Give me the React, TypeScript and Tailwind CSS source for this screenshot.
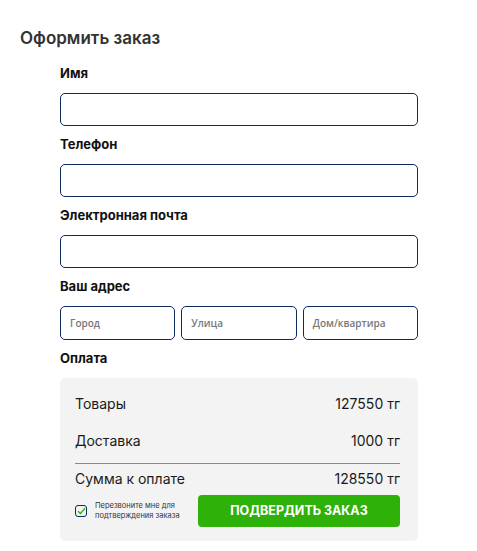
import React from "react";

const font = { fontFamily: "Inter, 'Noto Sans', sans-serif" };

function Field({ label }: { label: string }) {
  return (
    <div>
      <div className="h-4 leading-4 text-[13px] font-bold text-[#111] mb-3">{label}</div>
      <div className="h-[33px] border border-[#0d2b5c] rounded-[5px] bg-white mb-[10px]" />
    </div>
  );
}

export default function App() {
  return (
    <div className="w-[477px] h-[551px] bg-white" style={font}>
      <div className="pt-[26px] pl-[20px]">
        <div className="h-6 leading-6 text-[17px] font-semibold text-[#333]">Оформить заказ</div>
      </div>
      <div className="ml-[60px] w-[358px] mt-[15px]">
        <Field label="Имя" />
        <Field label="Телефон" />
        <Field label="Электронная почта" />
        <div className="h-4 leading-4 text-[13px] font-bold text-[#111] mb-3">Ваш адрес</div>
        <div className="flex gap-[6px] mb-[10px]">
          {["Город", "Улица", "Дом/квартира"].map((p) => (
            <div
              key={p}
              className="w-[116px] h-[34px] border border-[#0d2b5c] rounded-[5px] flex items-center pl-[9px] text-[10px] font-semibold text-[#777]"
              style={{ fontFamily: "'Open Sans', sans-serif" }}
            >
              {p}
            </div>
          ))}
        </div>
        <div className="h-4 leading-4 text-[13px] font-bold text-[#111] mb-3">Оплата</div>
        <div className="bg-[#f3f3f3] rounded-[5px] pl-[15px] pr-[18px] pt-[16px] pb-[14px] text-[14px] text-[#1a1a1a]">
          <div className="flex justify-between h-5 leading-5">
            <span>Товары</span>
            <span>127550 тг</span>
          </div>
          <div className="flex justify-between h-5 leading-5 mt-[17px]">
            <span>Доставка</span>
            <span>1000 тг</span>
          </div>
          <div className="h-px bg-[#8a8a8a] mt-[12px]" />
          <div className="flex justify-between h-5 leading-5 mt-[5px]">
            <span>Сумма к оплате</span>
            <span>128550 тг</span>
          </div>
          <div className="flex items-center justify-between mt-[6px]">
            <div className="flex items-center gap-[8px]">
              <div className="w-[12px] h-[12px] border-[1.5px] border-[#0d2b5c] rounded-[3px] flex items-center justify-center">
                <svg width="9" height="8" viewBox="0 0 9 8">
                  <path d="M1 4.2 L3.4 6.5 L8 1.3" fill="none" stroke="#2db300" strokeWidth="1.3" />
                </svg>
              </div>
              <div className="text-[7.5px] leading-[10px] text-[#333]">
                Перезвоните мне для
                <br />
                подтверждения заказа
              </div>
            </div>
            <div className="w-[202px] h-[32px] bg-[#2eb20a] rounded-[4px] flex items-center justify-center text-white text-[12.5px] font-bold">
              ПОДВЕРДИТЬ ЗАКАЗ
            </div>
          </div>
        </div>
      </div>
    </div>
  );
}
